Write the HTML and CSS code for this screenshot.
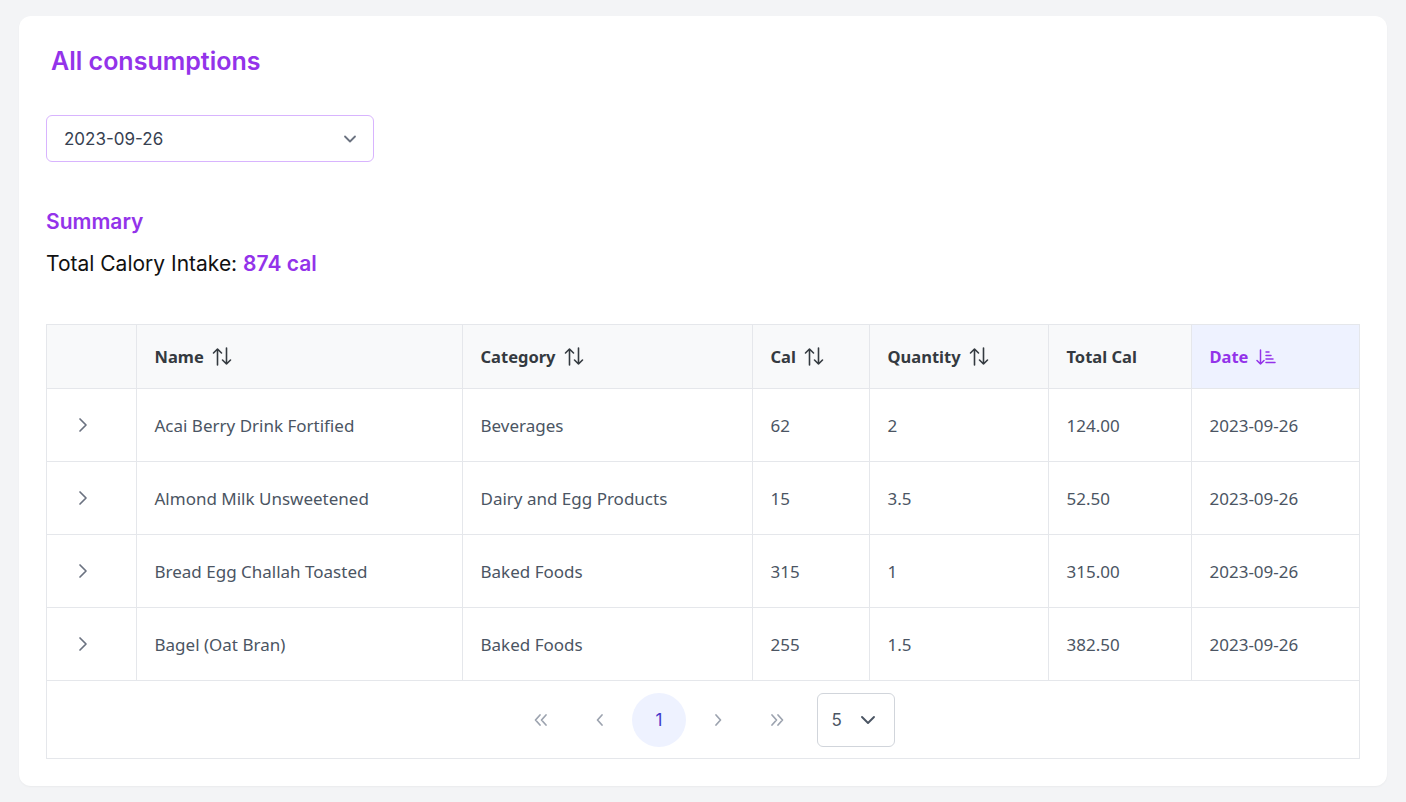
FILE: index.html
```html
<!DOCTYPE html>
<html lang="en">
<head>
<meta charset="utf-8">
<title>All consumptions</title>
<link rel="stylesheet" href="styles.css">
</head>
<body>
<main class="card">
  <h1 class="title">All consumptions</h1>
  <div class="date-select">
    <span>2023-09-26</span>
    <svg class="chev" width="14" height="14" viewBox="0 0 14 14"><path d="M2 4.5 L7 9.5 L12 4.5" fill="none" stroke="#6b7280" stroke-width="1.8" stroke-linecap="round" stroke-linejoin="round"/></svg>
  </div>
  <h2 class="summary">Summary</h2>
  <p class="total">Total Calory Intake: <strong>874 cal</strong></p>

  <div class="table-wrap">
    <table class="grid">
      <colgroup>
        <col style="width:89px"><col style="width:326px"><col style="width:290px"><col style="width:117px"><col style="width:179px"><col style="width:143px"><col>
      </colgroup>
      <thead>
        <tr>
          <th></th>
          <th><span class="th">Name <svg class="sort" width="20" height="19" viewBox="0 0 20 19"><path d="M5.5 18V2 M1.5 6 L5.5 2 L9.5 6 M14.5 1V17 M10.5 13 L14.5 17 L18.5 13" fill="none" stroke="#343a40" stroke-width="1.6" stroke-linecap="round" stroke-linejoin="round"/></svg></span></th>
          <th><span class="th">Category <svg class="sort" width="20" height="19" viewBox="0 0 20 19"><path d="M5.5 18V2 M1.5 6 L5.5 2 L9.5 6 M14.5 1V17 M10.5 13 L14.5 17 L18.5 13" fill="none" stroke="#343a40" stroke-width="1.6" stroke-linecap="round" stroke-linejoin="round"/></svg></span></th>
          <th><span class="th">Cal <svg class="sort" width="20" height="19" viewBox="0 0 20 19"><path d="M5.5 18V2 M1.5 6 L5.5 2 L9.5 6 M14.5 1V17 M10.5 13 L14.5 17 L18.5 13" fill="none" stroke="#343a40" stroke-width="1.6" stroke-linecap="round" stroke-linejoin="round"/></svg></span></th>
          <th><span class="th">Quantity <svg class="sort" width="20" height="19" viewBox="0 0 20 19"><path d="M5.5 18V2 M1.5 6 L5.5 2 L9.5 6 M14.5 1V17 M10.5 13 L14.5 17 L18.5 13" fill="none" stroke="#343a40" stroke-width="1.6" stroke-linecap="round" stroke-linejoin="round"/></svg></span></th>
          <th><span class="th">Total Cal</span></th>
          <th class="active"><span class="th">Date <svg class="sort" width="20" height="18" viewBox="0 0 20 18"><path d="M4.5 2V16 M1 12.5 L4.5 16 L8 12.5 M10 4H13 M10 7.5H15 M10 11H17 M10 14.5H19" fill="none" stroke="#9333ea" stroke-width="1.5" stroke-linecap="round" stroke-linejoin="round"/></svg></span></th>
        </tr>
      </thead>
      <tbody>
        <tr>
          <td class="exp"><svg width="14" height="16" viewBox="0 0 14 16"><path d="M4 2 L10 8 L4 14" fill="none" stroke="#6b7280" stroke-width="1.7" stroke-linecap="round" stroke-linejoin="round"/></svg></td>
          <td>Acai Berry Drink Fortified</td><td>Beverages</td><td>62</td><td>2</td><td>124.00</td><td>2023-09-26</td>
        </tr>
        <tr>
          <td class="exp"><svg width="14" height="16" viewBox="0 0 14 16"><path d="M4 2 L10 8 L4 14" fill="none" stroke="#6b7280" stroke-width="1.7" stroke-linecap="round" stroke-linejoin="round"/></svg></td>
          <td>Almond Milk Unsweetened</td><td>Dairy and Egg Products</td><td>15</td><td>3.5</td><td>52.50</td><td>2023-09-26</td>
        </tr>
        <tr>
          <td class="exp"><svg width="14" height="16" viewBox="0 0 14 16"><path d="M4 2 L10 8 L4 14" fill="none" stroke="#6b7280" stroke-width="1.7" stroke-linecap="round" stroke-linejoin="round"/></svg></td>
          <td>Bread Egg Challah Toasted</td><td>Baked Foods</td><td>315</td><td>1</td><td>315.00</td><td>2023-09-26</td>
        </tr>
        <tr>
          <td class="exp"><svg width="14" height="16" viewBox="0 0 14 16"><path d="M4 2 L10 8 L4 14" fill="none" stroke="#6b7280" stroke-width="1.7" stroke-linecap="round" stroke-linejoin="round"/></svg></td>
          <td>Bagel (Oat Bran)</td><td>Baked Foods</td><td>255</td><td>1.5</td><td>382.50</td><td>2023-09-26</td>
        </tr>
      </tbody>
    </table>
    <nav class="pager">
      <button class="pbtn"><svg width="16" height="14" viewBox="0 0 16 14"><path d="M7 2 L2.5 7 L7 12 M13 2 L8.5 7 L13 12" fill="none" stroke="#9ca3af" stroke-width="1.7" stroke-linecap="round" stroke-linejoin="round"/></svg></button>
      <button class="pbtn"><svg width="10" height="14" viewBox="0 0 10 14"><path d="M7 2 L2.5 7 L7 12" fill="none" stroke="#9ca3af" stroke-width="1.7" stroke-linecap="round" stroke-linejoin="round"/></svg></button>
      <button class="pbtn page">1</button>
      <button class="pbtn"><svg width="10" height="14" viewBox="0 0 10 14"><path d="M3 2 L7.5 7 L3 12" fill="none" stroke="#9ca3af" stroke-width="1.7" stroke-linecap="round" stroke-linejoin="round"/></svg></button>
      <button class="pbtn"><svg width="16" height="14" viewBox="0 0 16 14"><path d="M3 2 L7.5 7 L3 12 M9 2 L13.5 7 L9 12" fill="none" stroke="#9ca3af" stroke-width="1.7" stroke-linecap="round" stroke-linejoin="round"/></svg></button>
      <div class="rows">
        <span>5</span>
        <svg width="16" height="14" viewBox="0 0 16 14"><path d="M2 4 L8 10 L14 4" fill="none" stroke="#4b5563" stroke-width="1.9" stroke-linecap="round" stroke-linejoin="round"/></svg>
      </div>
    </nav>
  </div>
</main>
</body>
</html>
```

FILE: styles.css
```css
* { box-sizing: border-box; }
html, body { margin: 0; padding: 0; }
body {
  background: #f3f4f6;
  font-family: "Noto Sans", "Open Sans", sans-serif;
  padding: 16px 19px 16px 19px;
}
.card {
  background: #ffffff;
  border-radius: 12px;
  padding: 29px 27px 27px 27px;
  box-shadow: 0 1px 2px rgba(0,0,0,0.04);
}
.title {
  margin: 0 0 0 5px;
  font-family: "Inter", "Lato", sans-serif;
  font-weight: 600;
  font-size: 25px;
  line-height: 32px;
  color: #9333ea;
}
.date-select {
  margin-top: 38px;
  width: 328px;
  height: 47px;
  border: 1px solid #d8b4fe;
  border-radius: 6px;
  display: flex;
  align-items: center;
  justify-content: space-between;
  padding: 0 16px 0 17px;
  font-family: "Inter", sans-serif;
  font-size: 17px;
  color: #374151;
}
.summary {
  margin: 46px 0 0 0;
  font-family: "Inter", "Lato", sans-serif;
  font-weight: 600;
  font-size: 21px;
  line-height: 28px;
  color: #9333ea;
}
.total {
  margin: 14px 0 0 0;
  font-family: "Inter", "Lato", sans-serif;
  font-size: 21px;
  line-height: 28px;
  color: #111111;
}
.total strong { color: #9333ea; font-weight: 600; }
.table-wrap {
  margin-top: 46px;
  border: 1px solid #e5e7eb;
  border-top: none;
}
.grid {
  width: 100%;
  border-collapse: collapse;
  table-layout: fixed;
  font-size: 17px;
}
.grid th, .grid td {
  border: 1px solid #e5e7eb;
  text-align: left;
  padding: 0 18px;
}
.grid tr > :first-child { border-left: none; }
.grid tr > :last-child { border-right: none; }
.grid th {
  height: 64px;
  background: #f8f9fa;
  color: #343a40;
  font-weight: 700;
  font-size: 16.5px;
}
.grid th.active { background: #eef2ff; color: #9333ea; }
.th { display: inline-flex; align-items: center; gap: 8px; }
.sort { display: block; }
.grid td {
  height: 73px;
  color: #4b5563;
}
.grid td.exp { padding-left: 29px; }
.grid td.exp svg { display: block; }
.pager {
  height: 77px;
  display: flex;
  align-items: center;
  justify-content: center;
}
.pbtn {
  width: 54px;
  height: 54px;
  margin: 0 2.5px;
  border: none;
  border-radius: 50%;
  background: transparent;
  display: flex;
  align-items: center;
  justify-content: center;
  font-family: "Inter", sans-serif;
  font-size: 17px;
  color: #4338ca;
  padding: 0;
}
.pbtn.page { background: #eef2ff; }
.rows {
  margin-left: 10px;
  width: 78px;
  height: 54px;
  border: 1px solid #d1d5db;
  border-radius: 6px;
  display: flex;
  align-items: center;
  justify-content: space-between;
  padding: 0 18px 0 14px;
  font-family: "Inter", sans-serif;
  font-size: 17px;
  color: #4b5563;
}
```
